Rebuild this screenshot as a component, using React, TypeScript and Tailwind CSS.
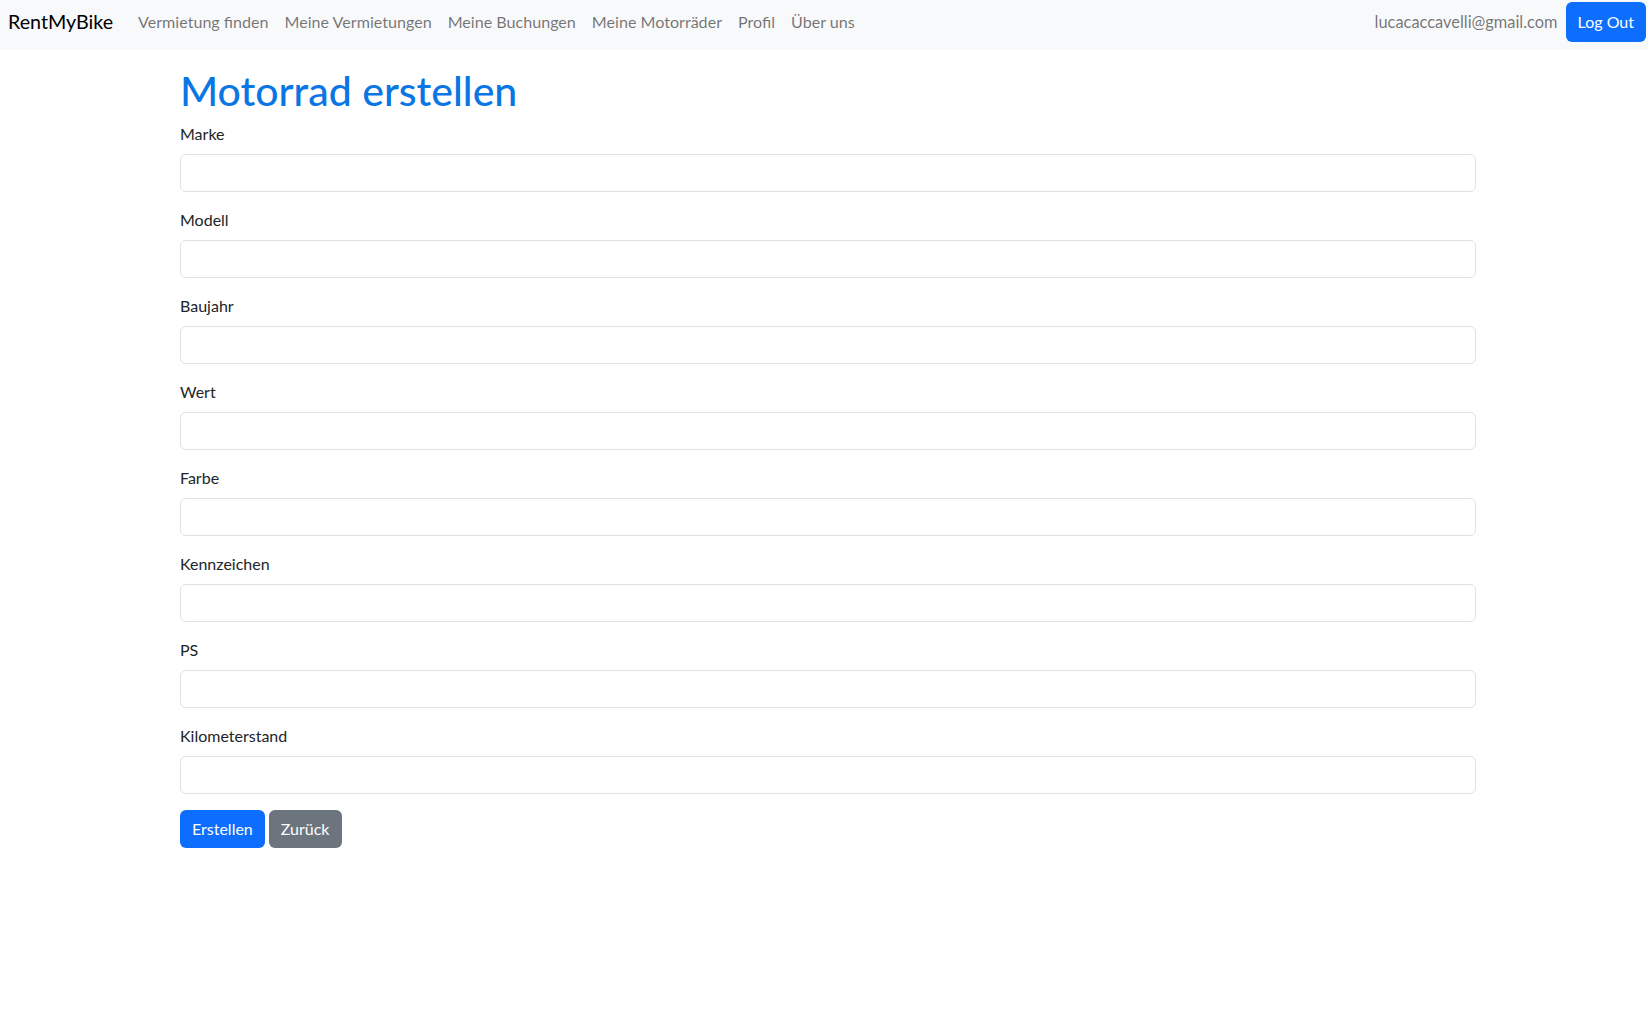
import React from "react";

const fields = ["Marke", "Modell", "Baujahr", "Wert", "Farbe", "Kennzeichen", "PS", "Kilometerstand"];
const links = ["Vermietung finden", "Meine Vermietungen", "Meine Buchungen", "Meine Motorräder", "Profil", "Über uns"];

export default function App() {
  return (
    <div className="min-h-[1013px] bg-white font-['Lato','Liberation_Sans',sans-serif] text-[16px] leading-[24px] text-[#212529]">
      <nav className="flex h-[50px] items-start bg-[#f8f9fa] pt-[2px] pr-[2px]">
        <div className="flex h-[40px] flex-1 items-center pl-[8px]">
          <span className="mr-[17px] text-[19.7px] leading-[30px] text-black">RentMyBike</span>
          <div className="flex items-center">
            {links.map((l) => (
              <span key={l} className="px-[8px] text-[16.1px] text-[rgba(0,0,0,0.55)]">
                {l}
              </span>
            ))}
          </div>
          <div className="ml-auto flex items-center">
            <span className="mr-[8px] text-[16.4px] text-[rgba(0,0,0,0.55)]">lucacaccavelli@gmail.com</span>
            <button className="h-[40px] rounded-[6px] bg-[#0d6efd] px-[12px] text-white">Log Out</button>
          </div>
        </div>
      </nav>
      <main className="ml-[180px] w-[1296px] pt-[17px]">
        <h1 className="mb-[7px] text-[41px] font-medium leading-[48px] text-[#0a76e4]">Motorrad erstellen</h1>
        <form>
          {fields.map((f) => (
            <div key={f} className="mb-[16px]">
              <label className="mb-[8px] block">{f}</label>
              <input
                type="text"
                className="block h-[38px] w-full rounded-[6px] border border-[#dee2e6] bg-white px-[12px] outline-none"
              />
            </div>
          ))}
          <div className="flex gap-[4px]">
            <button type="button" className="h-[38px] rounded-[6px] bg-[#0d6efd] px-[12px] text-white">
              Erstellen
            </button>
            <button type="button" className="h-[38px] rounded-[6px] bg-[#6c757d] px-[12px] text-white">
              Zurück
            </button>
          </div>
        </form>
      </main>
    </div>
  );
}
